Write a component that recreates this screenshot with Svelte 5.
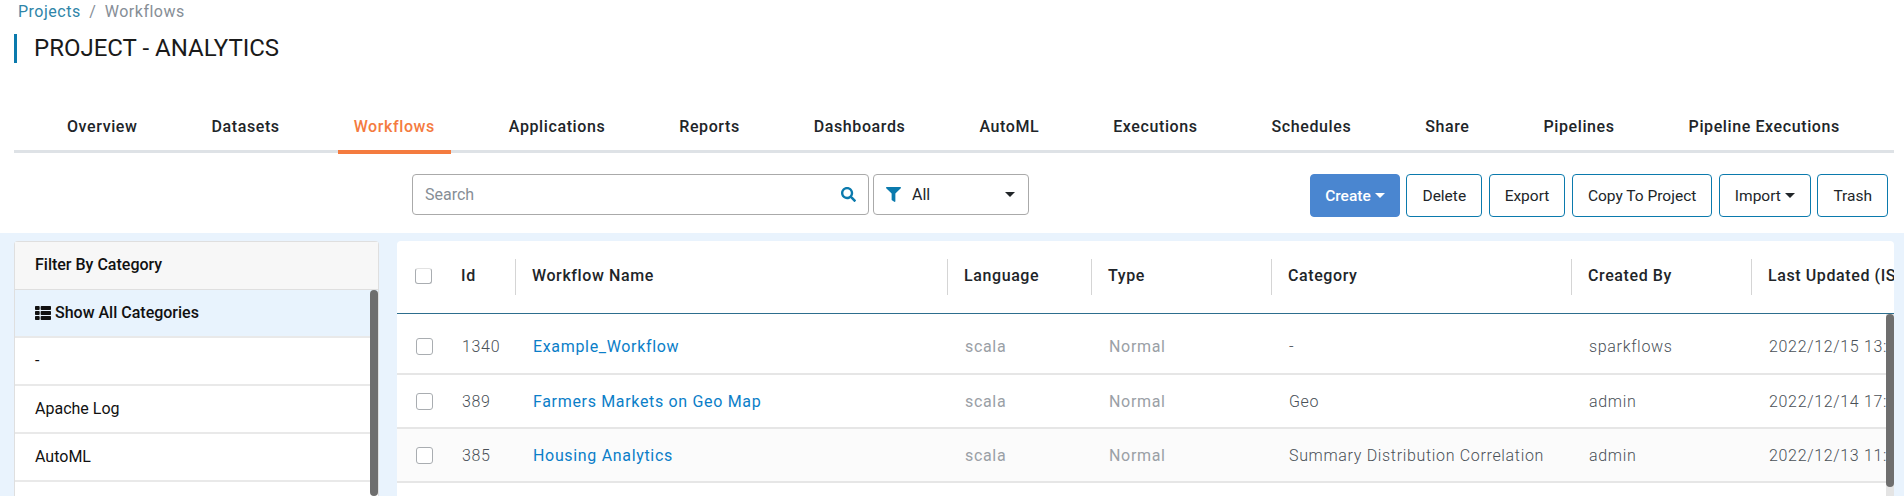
<script>
    const tabs = ["Overview", "Datasets", "Workflows", "Applications", "Reports", "Dashboards", "AutoML", "Executions", "Schedules", "Share", "Pipelines", "Pipeline Executions"];
    const categories = ["-", "Apache Log", "AutoML", ""];
    const columns = ["Id", "Workflow Name", "Language", "Type", "Category", "Created By", "Last Updated (IST)"];
    const rows = [
        { id: 1340, name: "Example_Workflow", category: "-", by: "sparkflows", updated: "2022/12/15 13:24:08" },
        { id: 389, name: "Farmers Markets on Geo Map", category: "Geo", by: "admin", updated: "2022/12/14 17:02:51" },
        { id: 385, name: "Housing Analytics", category: "Summary Distribution Correlation", by: "admin", updated: "2022/12/13 11:40:19" },
    ];
</script>

<div class="page">
    <div class="crumbs"><span class="crumb-link">Projects</span><span class="sep">/</span>Workflows</div>
    <h1>PROJECT - ANALYTICS</h1>

    <nav>
        {#each tabs as tab}
            <div class="tab" class:active={tab === "Workflows"}>{tab}</div>
        {/each}
    </nav>

    <div class="toolbar">
        <div class="search">
            <span>Search</span>
            <svg viewBox="0 0 512 512" width="15" height="15"><path fill="#0b7aad" d="M505 442.7L405.3 343c-4.5-4.5-10.6-7-17-7H372c27.6-35.3 44-79.7 44-128C416 93.1 322.9 0 208 0S0 93.1 0 208s93.1 208 208 208c48.3 0 92.7-16.4 128-44v16.3c0 6.4 2.5 12.5 7 17l99.7 99.7c9.4 9.4 24.6 9.4 33.9 0l28.3-28.3c9.4-9.4 9.4-24.6.1-34zM208 336c-70.7 0-128-57.2-128-128 0-70.7 57.2-128 128-128 70.7 0 128 57.2 128 128 0 70.7-57.2 128-128 128z"/></svg>
        </div>
        <div class="filter">
            <svg viewBox="0 0 512 512" width="15" height="15"><path fill="#0b7aad" d="M487.976 0H24.028C2.71 0-8.047 25.866 7.058 40.971L192 225.941V432c0 7.831 3.821 15.17 10.237 19.662l80 55.98C298.02 518.69 320 507.493 320 487.98V225.941l184.947-184.97C520.021 25.896 509.338 0 487.976 0z"/></svg>
            <span>All</span>
            <i class="caret"></i>
        </div>
        <div class="actions">
            <button class="primary">Create<i class="caret small"></i></button>
            <button>Delete</button>
            <button>Export</button>
            <button>Copy To Project</button>
            <button>Import<i class="caret small"></i></button>
            <button>Trash</button>
        </div>
    </div>

    <div class="content">
        <aside>
            <div class="aside-head">Filter By Category</div>
            <div class="cat selected head-weight">
                <svg viewBox="0 0 512 512" width="16" height="16"><path fill="#111" d="M149.333 216v80c0 13.255-10.745 24-24 24H24c-13.255 0-24-10.745-24-24v-80c0-13.255 10.745-24 24-24h101.333c13.255 0 24 10.745 24 24zM0 376v80c0 13.255 10.745 24 24 24h101.333c13.255 0 24-10.745 24-24v-80c0-13.255-10.745-24-24-24H24c-13.255 0-24 10.745-24 24zM125.333 32H24C10.745 32 0 42.745 0 56v80c0 13.255 10.745 24 24 24h101.333c13.255 0 24-10.745 24-24V56c0-13.255-10.745-24-24-24zm80 448H488c13.255 0 24-10.745 24-24v-80c0-13.255-10.745-24-24-24H205.333c-13.255 0-24 10.745-24 24v80c0 13.255 10.745 24 24 24zm-24-424v80c0 13.255 10.745 24 24 24H488c13.255 0 24-10.745 24-24V56c0-13.255-10.745-24-24-24H205.333c-13.255 0-24 10.745-24 24zm24 264H488c13.255 0 24-10.745 24-24v-80c0-13.255-10.745-24-24-24H205.333c-13.255 0-24 10.745-24 24v80c0 13.255 10.745 24 24 24z"/></svg>
                Show All Categories
            </div>
            {#each categories as c}
                <div class="cat">{c}</div>
            {/each}
            <div class="thumb side-thumb"></div>
        </aside>

        <section>
            <table>
                <colgroup>
                    <col style="width: 48px" />
                    <col style="width: 71px" />
                    <col style="width: 432px" />
                    <col style="width: 144px" />
                    <col style="width: 180px" />
                    <col style="width: 300px" />
                    <col style="width: 180px" />
                    <col style="width: 240px" />
                </colgroup>
                <thead>
                    <tr>
                        <th class="check-cell"><span class="box head-box"></span></th>
                        {#each columns as col, i}
                            <th><div class:divided={i > 0}>{col}</div></th>
                        {/each}
                    </tr>
                </thead>
                <tbody>
                    {#each rows as row, i}
                        <tr class:first={i === 0} class:shaded={i === 2}>
                            <td class="check-cell"><span class="box"></span></td>
                            <td>{row.id}</td>
                            <td><span class="link">{row.name}</span></td>
                            <td class="muted">scala</td>
                            <td class="muted">Normal</td>
                            <td>{row.category}</td>
                            <td>{row.by}</td>
                            <td class="nowrap">{row.updated}</td>
                        </tr>
                    {/each}
                </tbody>
            </table>
            <div class="track"><div class="thumb"></div></div>
        </section>
    </div>
</div>

<style>
    :global(body) {
        margin: 0;
        background: #fff;
    }

    .page {
        display: flex;
        flex-direction: column;
        height: 496px;
        overflow: hidden;
        font-family: Roboto, "Liberation Sans", sans-serif;
        color: #212529;
    }

    .crumbs {
        padding-left: 18px;
        height: 24px;
        line-height: 24px;
        font-size: 16px;
        letter-spacing: 0.5px;
        color: #868e96;
    }

    .crumb-link {
        color: #2f85a8;
    }

    .sep {
        margin: 0 8.5px;
    }

    h1 {
        margin: 10px 0 0 14px;
        height: 29px;
        padding-left: 17px;
        border-left: 3px solid #0b7aad;
        font-size: 24px;
        font-weight: 400;
        line-height: 29px;
        color: #1a1a1a;
    }

    nav {
        box-sizing: border-box;
        display: flex;
        justify-content: space-between;
        height: 53px;
        margin: 37px 10px 0 14px;
        padding: 0 38px 0 37px;
        border-bottom: 3px solid #dee2e6;
    }

    .tab {
        height: 33px;
        padding: 17px 16px 0;
        line-height: 20px;
        font-size: 16px;
        font-weight: 500;
        letter-spacing: 0.6px;
        color: #212529;
        border-bottom: 4px solid transparent;
    }

    .tab.active {
        color: #f47b3f;
        border-bottom-color: #f47b3f;
    }

    .toolbar {
        display: flex;
        align-items: flex-start;
        height: 43px;
        margin-top: 21px;
        padding: 0 16px 16px 412px;
    }

    .search,
    .filter {
        box-sizing: border-box;
        display: flex;
        align-items: center;
        height: 41px;
        border: 1px solid #aaa;
        border-radius: 4px;
        font-size: 16px;
    }

    .search {
        justify-content: space-between;
        width: 457px;
        padding: 0 12px;
        color: #868e96;
    }

    .filter {
        position: relative;
        width: 156px;
        margin-left: 4px;
        padding-left: 12px;
        gap: 11px;
        color: #212529;
    }

    .filter .caret {
        margin-left: auto;
        margin-right: 13px;
    }

    .caret {
        display: inline-block;
        width: 0;
        height: 0;
        border-top: 5px solid #212529;
        border-left: 5px solid transparent;
        border-right: 5px solid transparent;
    }

    .caret.small {
        margin-left: 4px;
        vertical-align: 3px;
        border-top-width: 5px;
        border-left-width: 5px;
        border-right-width: 5px;
    }

    .actions {
        display: flex;
        gap: 6.5px;
        margin-left: auto;
    }

    button {
        height: 43px;
        padding: 0 15px;
        background: #fff;
        border: 1px solid #0b7aad;
        border-radius: 4px;
        font: 400 15.5px Roboto, "Liberation Sans", sans-serif;
        color: #212529;
    }

    button.primary {
        width: 90px;
        padding: 0;
        background: #4a86d0;
        border-color: #4a86d0;
        font-weight: 500;
        color: #fff;
    }

    button.primary .caret {
        border-top-color: #fff;
    }

    .content {
        flex: 1;
        display: flex;
        gap: 18px;
        min-height: 0;
        padding: 8px 10px 0 14px;
        background: #e9f3fd;
    }

    aside {
        position: relative;
        box-sizing: border-box;
        width: 365px;
        flex-shrink: 0;
        background: #fff;
        border: 1px solid #dfdfdf;
        border-bottom: none;
        border-radius: 4px 4px 0 0;
        font-size: 16px;
        font-weight: 400;
        color: #111;
    }

    .aside-head {
        box-sizing: border-box;
        height: 48px;
        padding: 0 20px;
        line-height: 46px;
        font-weight: 500;
        background: #f7f7f7;
        border-bottom: 1px solid #dfdfdf;
    }

    .cat {
        box-sizing: border-box;
        height: 48px;
        padding: 0 20px;
        line-height: 46px;
        border-bottom: 2px solid #e9e9e9;
    }

    .cat.selected {
        background: #e8f3fd;
    }

    .head-weight {
        font-weight: 500;
    }

    .cat svg {
        vertical-align: -3px;
    }

    .thumb {
        width: 8px;
        background: #6e6e6e;
        border-radius: 4px;
    }

    .side-thumb {
        position: absolute;
        top: 48px;
        right: 0;
        bottom: 0;
    }

    section {
        position: relative;
        flex: 1;
        min-width: 0;
        overflow: hidden;
        background: #fff;
        border-radius: 4px 4px 0 0;
    }

    table {
        width: 1595px;
        table-layout: fixed;
        border-collapse: separate;
        border-spacing: 0;
        font-size: 16px;
        letter-spacing: 0.6px;
    }

    th {
        box-sizing: border-box;
        height: 73px;
        padding: 0;
        text-align: left;
        font-weight: 500;
        color: #212529;
        border-bottom: 1px solid #2d6e8e;
    }

    th div {
        height: 36px;
        padding-left: 16px;
        line-height: 34px;
    }

    th div.divided {
        margin-left: -1px;
        border-left: 1px solid #d5d5d5;
    }

    td {
        box-sizing: border-box;
        height: 54px;
        padding: 0 0 0 17px;
        color: #495057;
        font-weight: 300;
        letter-spacing: 0.67px;
        border-bottom: 2px solid #e6e6e6;
        white-space: nowrap;
        overflow: hidden;
    }

    tr.first td {
        height: 61px;
        padding-top: 6px;
    }

    tr.shaded td {
        background: #fbfbfb;
    }

    td.muted {
        color: #9aa0a6;
        font-weight: 400;
    }

    .link {
        color: #0b7ec8;
        font-weight: 400;
    }

    td.check-cell {
        padding-left: 19px;
    }

    th.check-cell {
        padding-left: 18px;
    }

    .box {
        display: block;
        box-sizing: border-box;
        width: 17px;
        height: 17px;
        border: 1px solid #a9adb1;
        border-radius: 3px;
        background: #fff;
    }

    .head-box {
        height: 16px;
        margin-bottom: 3px;
        border-top-color: #e2e2e2;
    }

    .track {
        position: absolute;
        top: 73px;
        right: 0;
        bottom: 0;
        width: 8px;
        background: #e4e4e4;
    }

    .track .thumb {
        height: 173px;
    }
</style>
